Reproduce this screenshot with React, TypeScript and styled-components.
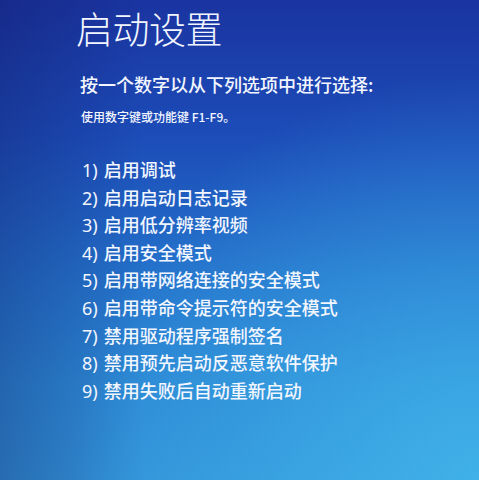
import React from 'react';
import styled, { createGlobalStyle } from 'styled-components';

const options = [
  '启用调试',
  '启用启动日志记录',
  '启用低分辨率视频',
  '启用安全模式',
  '启用带网络连接的安全模式',
  '启用带命令提示符的安全模式',
  '禁用驱动程序强制签名',
  '禁用预先启动反恶意软件保护',
  '禁用失败后自动重新启动',
];

const GlobalStyle = createGlobalStyle`
  body {
    margin: 0;
    background: #ffffff;
    font-family: "Noto Sans CJK SC", "Noto Sans", sans-serif;
  }
`;

const Screen = styled.div`
  height: 480px;
  box-sizing: border-box;
  padding: 6px 0 0 76px;
  color: #f2f6ff;
  background:
    radial-gradient(ellipse at 100% 100%, rgba(70, 190, 240, 0.7) 0%, rgba(70, 190, 240, 0) 60%),
    linear-gradient(90deg, rgba(15, 20, 90, 0.3) 0%, rgba(15, 20, 90, 0) 30%),
    linear-gradient(180deg, #1a34a0 0%, #1c4cb8 28%, #2472cb 58%, #2c88d4 80%, #3292d8 100%);
`;

const Title = styled.h1`
  margin: 0;
  font-size: 37px;
  line-height: 44px;
  font-weight: 300;
  letter-spacing: -0.5px;
`;

const Prompt = styled.p`
  margin: 22px 0 0 4px;
  font-size: 18px;
  line-height: 24px;
  font-weight: 500;
`;

const Hint = styled.p`
  margin: 13px 0 0 5px;
  font-size: 12px;
  line-height: 16px;
  font-weight: 500;
`;

const OptionList = styled.ol`
  list-style: none;
  margin: 31px 0 0 6px;
  padding: 0;
`;

const Option = styled.li`
  font-size: 18px;
  line-height: 26.6px;
  font-weight: 500;
  white-space: nowrap;
`;

const Num = styled.span`
  font-family: "Noto Sans", sans-serif;
  font-weight: 400;
  margin-right: 6px;
`;

export default function App() {
  return (
    <>
      <GlobalStyle />
      <Screen>
        <Title>启动设置</Title>
        <Prompt>按一个数字以从下列选项中进行选择:</Prompt>
        <Hint>使用数字键或功能键 F1-F9。</Hint>
        <OptionList>
          {options.map((text, i) => (
            <Option key={i}>
              <Num>{i + 1})</Num>
              {text}
            </Option>
          ))}
        </OptionList>
      </Screen>
    </>
  );
}
